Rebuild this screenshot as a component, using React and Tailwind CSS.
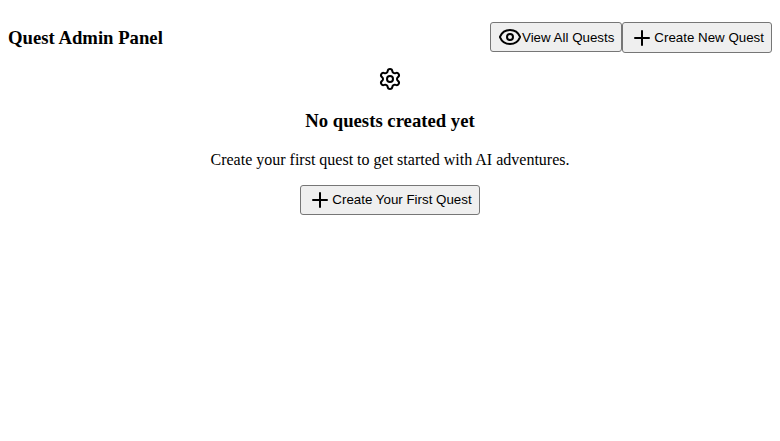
import { Eye, Plus, Settings } from "lucide-react";

function Button({ className = "", icon: Icon, children }) {
  return (
    <button
      className={`flex items-center justify-center rounded-[3px] border border-[#767676] bg-[#efefef] px-[7px] font-['Liberation_Sans',Arial,sans-serif] text-[13.333px] leading-[15px] whitespace-nowrap text-black ${className}`}
    >
      <Icon size={24} />
      {children}
    </button>
  );
}

export default function App() {
  return (
    <div className="p-2 font-['Liberation_Serif','Times_New_Roman',serif] text-base text-black">
      <header className="flex items-center justify-between pt-[14px]">
        <h3 className="text-[18.72px] leading-[21px] font-bold">Quest Admin Panel</h3>
        <div className="flex items-start">
          <Button icon={Eye} className="h-[30px]">View All Quests</Button>
          <Button icon={Plus} className="h-[31px]">Create New Quest</Button>
        </div>
      </header>
      <main className="flex flex-col items-center pt-[14px]">
        <Settings size={24} />
        <h3 className="mt-[19px] text-[18.72px] leading-[21px] font-bold">No quests created yet</h3>
        <p className="mt-5 leading-[18px]">Create your first quest to get started with AI adventures.</p>
        <Button icon={Plus} className="mt-4 h-[30px]">
          <span className="-mt-px">Create Your First Quest</span>
        </Button>
      </main>
    </div>
  );
}
